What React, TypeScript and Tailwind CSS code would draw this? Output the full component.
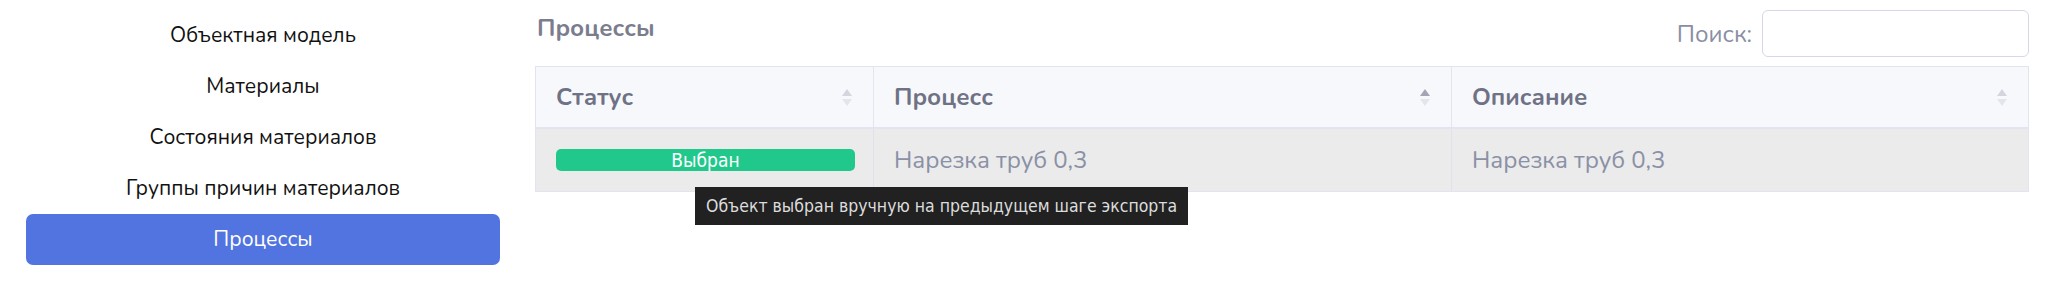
import React from 'react';

const menu = [
    'Объектная модель',
    'Материалы',
    'Состояния материалов',
    'Группы причин материалов',
    'Процессы',
];

function SortArrows({ active = false }: { active?: boolean }) {
    return (
        <span className="flex flex-col items-center gap-[3px]">
            <svg width="10" height="7" viewBox="0 0 10 7">
                <path d="M5 0 L10 7 L0 7 Z" fill={active ? '#a3a5b4' : '#d3d5df'} />
            </svg>
            <svg width="10" height="7" viewBox="0 0 10 7">
                <path d="M0 0 L10 0 L5 7 Z" fill="#e3e5ee" />
            </svg>
        </span>
    );
}

export default function App() {
    const narrow = { fontFamily: '"Liberation Sans Narrow", "DejaVu Sans Condensed", "Liberation Sans", sans-serif' };

    return (
        <div
            className="flex w-[2053px] h-[289px] bg-white"
            style={{ fontFamily: 'Nunito, "Noto Sans", Lato, sans-serif' }}
        >
            {/* Sidebar */}
            <div className="w-[535px] shrink-0 pl-[26px] pr-[35px] pt-[10px] flex flex-col">
                {menu.map((item, i) => {
                    const active = i === menu.length - 1;
                    return (
                        <div
                            key={item}
                            className={`h-[51px] flex items-center justify-center text-[21px] rounded-[7px] ${active ? 'bg-[#5174e0] text-white' : 'text-[#111]'
                                }`}
                        >
                            {item}
                        </div>
                    );
                })}
            </div>

            {/* Content */}
            <div className="flex-1 pr-[24px] pt-[10px]">
                <div className="flex justify-between items-start h-[47px]">
                    <h2 className="text-[24px] leading-[36px] font-bold text-[#7b7d8e] pl-[2px]">Процессы</h2>
                    <div className="flex items-center gap-[10px] h-[47px]">
                        <span className="text-[24px] text-[#8a8ea3]">Поиск:</span>
                        <input className="w-[267px] h-[47px] border border-[#d8d6e8] rounded-[6px] outline-none" />
                    </div>
                </div>

                <div className="mt-[9px] border border-[#e3e4f0]">
                    {/* Header */}
                    <div className="grid grid-cols-[338px_578px_1fr] h-[62px] bg-[#f7f8fc] border-b-2 border-[#e3e4f0]">
                        <div className="flex items-center justify-between pl-[20px] pr-[21px] border-r border-[#e3e4f0]">
                            <span className="text-[24px] font-bold text-[#6f7285]">Статус</span>
                            <SortArrows />
                        </div>
                        <div className="flex items-center justify-between pl-[20px] pr-[21px] border-r border-[#e3e4f0]">
                            <span className="text-[24px] font-bold text-[#6f7285]">Процесс</span>
                            <SortArrows active />
                        </div>
                        <div className="flex items-center justify-between pl-[20px] pr-[21px]">
                            <span className="text-[24px] font-bold text-[#6f7285]">Описание</span>
                            <SortArrows />
                        </div>
                    </div>

                    {/* Row */}
                    <div className="grid grid-cols-[338px_578px_1fr] h-[62px] bg-[#ebebeb]">
                        <div className="flex items-center pl-[20px] pr-[18px] border-r border-[#e0e1ec]">
                            <div className="relative w-full">
                                <div
                                    className="h-[22px] w-full rounded-[5px] bg-[#20c98b] text-white text-[19px] leading-[22px] text-center"
                                    style={narrow}
                                >
                                    Выбран
                                </div>
                                {/* Tooltip */}
                                <div
                                    className="absolute left-[139px] top-[38px] h-[38px] px-[11px] flex items-center bg-[#212121] text-[#dcdcdc] text-[17.5px] whitespace-nowrap z-10"
                                    style={narrow}
                                >
                                    Объект выбран вручную на предыдущем шаге экспорта
                                </div>
                            </div>
                        </div>
                        <div className="flex items-center pl-[20px] text-[24px] text-[#8a90a6] border-r border-[#e0e1ec]">
                            Нарезка труб 0,3
                        </div>
                        <div className="flex items-center pl-[20px] text-[24px] text-[#8a90a6]">
                            Нарезка труб 0,3
                        </div>
                    </div>
                </div>
            </div>
        </div>
    );
}
